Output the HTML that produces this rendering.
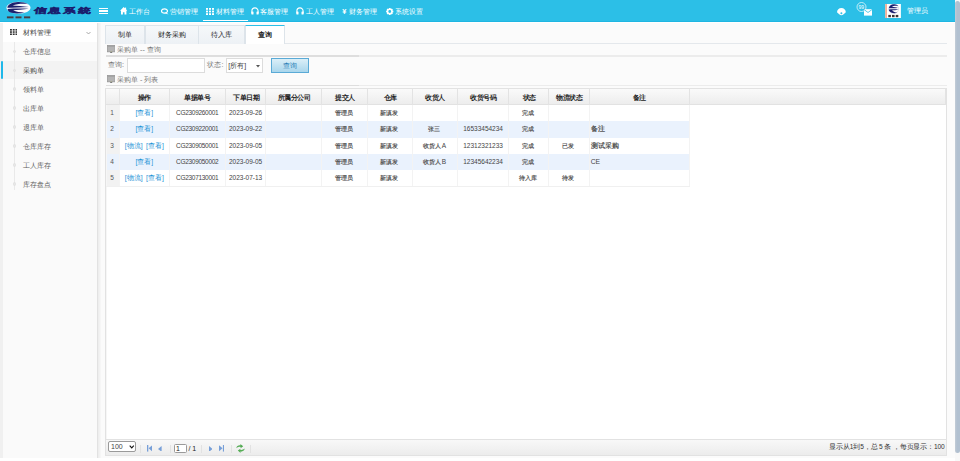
<!DOCTYPE html>
<html><head><meta charset="utf-8">
<style>
*{box-sizing:border-box;margin:0;padding:0}
html,body{width:960px;height:461px;overflow:hidden;background:#fff;font-family:"Liberation Sans",sans-serif;color:#333;font-weight:500}
.a{position:absolute;white-space:nowrap}
#hdr{position:absolute;left:0;top:0;width:955px;height:22.4px;background:#2cbfe7;border-bottom:0.4px solid #1fb6e2}
.nav{position:absolute;top:7.2px;font-size:7.4px;color:#fff;line-height:10px}
#side{position:absolute;left:0;top:22px;width:98px;height:436px;background:#fafafa;border-right:1px solid #e2e2e2}
#main{position:absolute;left:98px;top:22px;width:857px;height:436px;background:#fbfbfb}
#sb{position:absolute;left:955px;top:0;width:5px;height:461px;background:#f8f8f8}
#thumb{position:absolute;left:955.4px;top:0.5px;width:5px;height:452px;background:linear-gradient(90deg,#c3ccd6,#b1c0d0 40%);border-radius:2.5px}
.side-it{position:absolute;left:23px;font-size:7.2px;color:#606060;line-height:10px}
.tab{position:absolute;top:25px;height:18.5px;background:linear-gradient(#f5f8fa,#edf1f5);border:1px solid #dde4ea;border-bottom:none;border-radius:1px 1px 0 0;font-size:7.3px;color:#222;text-align:center;line-height:17px}
.sec{position:absolute;left:117px;font-size:7.2px;color:#777;line-height:10px}
.mon{position:absolute;left:107px;width:8px;height:7px;background:#aaa;border:1px solid #999}
.hr{position:absolute;left:105.5px;width:253px;height:1.6px;background:#dedede}
.hr2{position:absolute;left:358.5px;width:588.5px;height:1.6px;background:#ececec}
.th{position:absolute;top:88.3px;height:16.6px;font-size:7px;font-weight:bold;color:#222;text-align:center;line-height:17.2px;border-right:1px solid #e3e3e3}
.td{position:absolute;height:16.4px;font-size:6.5px;color:#444;text-align:center;line-height:16.9px;border-right:1px solid #f3f3f3}
.thl{position:absolute;top:97.7px;font-size:13px;font-weight:bold;color:#222;line-height:20px;white-space:nowrap;transform:translate(-50%,-50%) scale(0.5)}
.c{font-size:6px;position:relative;left:-1px;font-weight:700;color:#5a5a5a}
.lnk .c{font-size:6.6px;left:0;color:inherit;font-weight:500}
.bz .c{font-size:6.7px;left:0;font-weight:700;color:#555}
.cg{letter-spacing:-0.3px}
.lnk{color:#1f93d6;font-size:6.8px}
.logo-t{top:5.6px;width:0;font-size:7.2px;line-height:9px;font-weight:900;color:#1a1f6e;-webkit-text-stroke:0.45px #1a1f6e;transform:scaleX(1.75) skewX(-3deg);text-align:center}
.logo-t{text-indent:-3.2px}
.dot{position:absolute;left:12.6px;width:3.2px;height:3.2px;border-radius:50%;background:#e6e6e6;border:0.6px solid #e2e2e2}
</style></head><body>
<div id="hdr"></div>
<!-- logo -->
<svg class="a" style="left:0;top:0" width="36" height="22" viewBox="0 0 36 22">
<ellipse cx="18.5" cy="7.85" rx="12" ry="6" fill="#fbfbfd"/>
<path d="M7.3 7.8 C7.8 4.5 12 2.3 18 2.1 C22 2 25.5 2.8 27.8 4.2 C23 3.5 17 3.9 12.6 5.5 C17 5.7 23 6.2 28.8 7.1 C21 7.5 13 7.8 7.3 7.8Z" fill="#1d216e"/>
<path d="M7.6 8.9 C13 8.5 21 8.4 28.8 8.7 C23 9.5 17 9.9 13.2 10.3 C16 11.8 20 12.5 24.5 12.6 C19 13.9 13 13.7 10 12.3 C8.6 11.5 7.7 10.3 7.6 8.9Z" fill="#1d216e"/>
<g fill="#4a3c44"><rect x="6.9" y="16.4" width="6.6" height="1.9"/><rect x="15.5" y="16.4" width="6" height="1.9"/><rect x="24" y="16.4" width="6.2" height="1.9"/></g>
</svg>
<div class="a logo-t" style="left:39.5px">信</div><div class="a logo-t" style="left:53.8px">息</div><div class="a logo-t" style="left:68.6px">系</div><div class="a logo-t" style="left:83.6px">統</div>
<!-- hamburger -->
<div class="a" style="left:99px;top:7.5px;width:8.5px;height:1.6px;background:#fff"></div>
<div class="a" style="left:99px;top:10.2px;width:8.5px;height:1.6px;background:#fff"></div>
<div class="a" style="left:99px;top:12.9px;width:8.5px;height:1.6px;background:#fff"></div>
<!-- nav -->
<svg class="a" style="left:120px;top:7px" width="7.4" height="7.6" viewBox="0 0 7.4 7.6"><path d="M3.7 0 L7.4 3.7 L6.4 3.7 L6.4 7.6 L4.5 7.6 L4.5 5.3 L2.9 5.3 L2.9 7.6 L1 7.6 L1 3.7 L0 3.7Z" fill="#fff"/><rect x="5" y="0.6" width="1.1" height="2" fill="#fff"/></svg>
<div class="nav" style="left:129px">工作台</div>
<svg class="a" style="left:161px;top:8px" width="8" height="7" viewBox="0 0 8 7"><ellipse cx="3.5" cy="3" rx="3" ry="2.2" fill="none" stroke="#fff" stroke-width="1.2"/><path d="M5 4 L7.5 6.5 L4 5.2Z" fill="#fff"/></svg>
<div class="nav" style="left:170.4px">营销管理</div>
<svg class="a" style="left:206px;top:8px" width="8" height="7" viewBox="0 0 8 7"><g fill="#fff"><rect x="0" y="0" width="2" height="1.8"/><rect x="3" y="0" width="2" height="1.8"/><rect x="6" y="0" width="2" height="1.8"/><rect x="0" y="2.6" width="2" height="1.8"/><rect x="3" y="2.6" width="2" height="1.8"/><rect x="6" y="2.6" width="2" height="1.8"/><rect x="0" y="5.2" width="2" height="1.8"/><rect x="3" y="5.2" width="2" height="1.8"/><rect x="6" y="5.2" width="2" height="1.8"/></g></svg>
<div class="nav" style="left:215.6px">材料管理</div>
<div class="a" style="left:202.5px;top:19.5px;width:45px;height:1.3px;background:#fff"></div>
<svg class="a" style="left:251px;top:7px" width="8" height="8" viewBox="0 0 8 8"><path d="M0.9 6.5 L0.9 4 A3.1 3.1 0 0 1 7.1 4 L7.1 6.5" fill="none" stroke="#fff" stroke-width="1.1"/><rect x="0.4" y="4.4" width="2.1" height="3.1" rx="0.6" fill="#fff"/><rect x="5.5" y="4.4" width="2.1" height="3.1" rx="0.6" fill="#fff"/></svg>
<div class="nav" style="left:260.3px">客服管理</div>
<svg class="a" style="left:296px;top:7px" width="8" height="8" viewBox="0 0 8 8"><path d="M0.9 6.5 L0.9 4 A3.1 3.1 0 0 1 7.1 4 L7.1 6.5" fill="none" stroke="#fff" stroke-width="1.1"/><rect x="0.4" y="4.4" width="2.1" height="3.1" rx="0.6" fill="#fff"/><rect x="5.5" y="4.4" width="2.1" height="3.1" rx="0.6" fill="#fff"/></svg>
<div class="nav" style="left:305.7px">工人管理</div>
<div class="nav" style="left:342.3px;font-weight:bold">¥</div>
<div class="nav" style="left:348.8px">财务管理</div>
<svg class="a" style="left:386px;top:7.5px" width="7.5" height="7" viewBox="-3.75 -3.5 7.5 7"><circle r="2.25" fill="none" stroke="#fff" stroke-width="1.6"/><rect x="-0.8" y="-3.6" width="1.6" height="1.6" transform="rotate(0)" fill="#fff"/><rect x="-0.8" y="-3.6" width="1.6" height="1.6" transform="rotate(45)" fill="#fff"/><rect x="-0.8" y="-3.6" width="1.6" height="1.6" transform="rotate(90)" fill="#fff"/><rect x="-0.8" y="-3.6" width="1.6" height="1.6" transform="rotate(135)" fill="#fff"/><rect x="-0.8" y="-3.6" width="1.6" height="1.6" transform="rotate(180)" fill="#fff"/><rect x="-0.8" y="-3.6" width="1.6" height="1.6" transform="rotate(225)" fill="#fff"/><rect x="-0.8" y="-3.6" width="1.6" height="1.6" transform="rotate(270)" fill="#fff"/><rect x="-0.8" y="-3.6" width="1.6" height="1.6" transform="rotate(315)" fill="#fff"/></svg>
<div class="nav" style="left:395.3px">系统设置</div>
<!-- right icons -->
<svg class="a" style="left:830px;top:2px" width="22" height="18" viewBox="0 0 22 18"><path d="M7 10.3 C7 7.5 9 5.9 11.4 5.9 C13.8 5.9 15.8 7.5 15.8 10.3 C14.5 11.8 12.8 13.3 11.4 13.3 C10 13.3 8.3 11.8 7 10.3Z" fill="#fff"/><circle cx="11.4" cy="11.2" r="1" fill="#2cbfe7"/></svg>
<svg class="a" style="left:856px;top:2px" width="17" height="14" viewBox="0 0 17 14"><circle cx="5.5" cy="5" r="4.5" fill="none" stroke="#fff" stroke-width="0.7"/><text x="2.5" y="7" font-size="5" fill="#fff" font-family="Liberation Sans">99</text><rect x="8" y="7.2" width="8" height="6.4" fill="#fff"/><path d="M8 7.5 L12 10.5 L16 7.5" fill="none" stroke="#2cbfe7" stroke-width="0.8"/></svg>
<svg class="a" style="left:882px;top:2px" width="22" height="18" viewBox="0 0 22 18">
<rect x="3.3" y="2" width="15.6" height="14" fill="#fff"/>
<rect x="3.3" y="2" width="1.6" height="14" fill="#f3a88c"/>
<ellipse cx="11.7" cy="6.8" rx="5" ry="4.6" fill="none" stroke="#c9cbe0" stroke-width="0.6"/>
<path d="M6.8 6.2 C7.2 3.5 9.5 2.3 12 2.3 C14 2.3 15.5 3 16.3 4 C14 3.4 11.5 3.6 10 4.8 C12 5 14.5 5.4 16 6 C13 6.3 9.5 6.4 6.8 6.2Z" fill="#1c2070"/>
<path d="M6.8 7.4 C9.5 7.2 13 7.2 16.5 7.5 C14 8.2 11.5 8.4 10 8.4 C11.5 9.8 14 10.6 15.5 10.4 C13.5 11.6 9.5 11.4 7.8 9.6 C7.2 8.9 6.9 8.2 6.8 7.4Z" fill="#1c2070"/>
<g fill="#3e3434"><rect x="6.3" y="12.9" width="2.6" height="2.3"/><rect x="10" y="12.9" width="2.6" height="2.3"/><rect x="13.7" y="12.9" width="2.6" height="2.3"/></g>
</svg>
<div class="nav" style="left:907px;top:6px">管理员</div>

<!-- sidebar -->
<div id="side"></div>
<div class="a" style="left:0;top:22px;width:2.7px;height:436px;background:#f0f0f0"></div>
<div class="a" style="left:2.6px;top:22px;width:94.6px;height:19.5px;background:#fff"></div>
<svg class="a" style="left:9.8px;top:28.9px" width="7.4" height="6.1" viewBox="0 0 7 6" preserveAspectRatio="none"><g fill="#333"><rect x="0" y="0" width="1.8" height="1.6"/><rect x="2.6" y="0" width="1.8" height="1.6"/><rect x="5.2" y="0" width="1.8" height="1.6"/><rect x="0" y="2.2" width="1.8" height="1.6"/><rect x="2.6" y="2.2" width="1.8" height="1.6"/><rect x="5.2" y="2.2" width="1.8" height="1.6"/><rect x="0" y="4.4" width="1.8" height="1.6"/><rect x="2.6" y="4.4" width="1.8" height="1.6"/><rect x="5.2" y="4.4" width="1.8" height="1.6"/></g></svg>
<div class="a" style="left:23.4px;top:27.5px;font-size:7.3px;color:#444;line-height:10px">材料管理</div>
<svg class="a" style="left:86px;top:31px" width="5" height="4" viewBox="0 0 5 4"><path d="M0.5 1 L2.5 3 L4.5 1" fill="none" stroke="#888" stroke-width="0.7"/></svg>
<div class="a" style="left:2.7px;top:60.5px;width:94.5px;height:18.7px;background:#f3f3f3"></div>
<div class="a" style="left:0.5px;top:60.8px;width:2.1px;height:18.6px;background:#1fb8ea;border-radius:1px"></div>
<div class="a" style="left:13.7px;top:41.5px;width:1px;height:148.5px;background:#e9e9e9"></div>
<div class="dot" style="top:49.7px"></div><div class="dot" style="top:68.6px"></div><div class="dot" style="top:87.4px"></div><div class="dot" style="top:106.4px"></div><div class="dot" style="top:125.4px"></div><div class="dot" style="top:144.4px"></div><div class="dot" style="top:163.4px"></div><div class="dot" style="top:182.4px"></div>
<div class="side-it" style="top:46.7px">仓库信息</div>
<div class="side-it" style="top:65.5px;color:#444">采购单</div>
<div class="side-it" style="top:84.6px">领料单</div>
<div class="side-it" style="top:103.6px">出库单</div>
<div class="side-it" style="top:122.6px">退库单</div>
<div class="side-it" style="top:141.6px">仓库库存</div>
<div class="side-it" style="top:160.6px">工人库存</div>
<div class="side-it" style="top:179.6px">库存盘点</div>

<!-- main -->
<div id="main"></div>
<div class="a" style="left:0;top:22.4px;width:955px;height:1.1px;background:#fff"></div>

<div class="a" style="left:105.3px;top:43.3px;width:841.5px;height:1px;background:#e4e8ec"></div>
<div class="tab" style="left:105.3px;width:40px">制单</div>
<div class="tab" style="left:145px;width:53.5px">财务采购</div>
<div class="tab" style="left:198.3px;width:47px">待入库</div>
<div class="tab" style="left:245.1px;width:39.8px;height:19.3px;background:#fff;border-top:1.2px solid #2cbfe7;color:#222;font-weight:bold">查询</div>

<svg class="a" style="left:106.8px;top:45px" width="8.4" height="8.4" viewBox="0 0 8.4 8.4"><rect x="0.3" y="0.3" width="7.8" height="6.6" fill="#b4b4b4" stroke="#8f8f8f" stroke-width="0.6"/><rect x="0.6" y="0.6" width="7.2" height="1" fill="#9c9c9c"/><rect x="3.2" y="6.9" width="2" height="1.3" fill="#7a7a7a"/><rect x="3.8" y="6.4" width="0.8" height="0.5" fill="#c8d070"/></svg>
<div class="sec" style="top:44.5px">采购单 -- 查询</div>
<div class="hr" style="top:55.2px"></div><div class="hr2" style="top:55.2px"></div>
<div class="a" style="left:108px;top:59.5px;font-size:7.2px;color:#777;line-height:10px">查询:</div>
<div class="a" style="left:127.3px;top:58px;width:77.3px;height:14.5px;background:#fff;border:1px solid #dcdcdc"></div>
<div class="a" style="left:207.4px;top:59.5px;font-size:7.2px;color:#777;line-height:10px">状态:</div>
<div class="a" style="left:226.2px;top:58px;width:36.5px;height:14.7px;background:#fff;border:1px solid #dcdcdc"></div>
<div class="a" style="left:228.2px;top:60.5px;font-size:7px;color:#444;line-height:10px">[所有]</div>
<svg class="a" style="left:256px;top:65px" width="4" height="3" viewBox="0 0 4 3"><path d="M0 0 L4 0 L2 2.5Z" fill="#555"/></svg>
<div class="a" style="left:271.1px;top:58px;width:37.8px;height:15px;background:linear-gradient(#dbeff8,#a9d6ec);border:1px solid #5aaad6;font-size:7px;color:#2a7fb8;text-align:center;line-height:13px">查询</div>

<svg class="a" style="left:106.8px;top:75px" width="8.4" height="8.4" viewBox="0 0 8.4 8.4"><rect x="0.3" y="0.3" width="7.8" height="6.6" fill="#b4b4b4" stroke="#8f8f8f" stroke-width="0.6"/><rect x="0.6" y="0.6" width="7.2" height="1" fill="#9c9c9c"/><rect x="3.2" y="6.9" width="2" height="1.3" fill="#7a7a7a"/><rect x="3.8" y="6.4" width="0.8" height="0.5" fill="#c8d070"/></svg>
<div class="sec" style="top:74.5px">采购单 - 列表</div>
<div class="hr" style="top:84.9px"></div><div class="hr2" style="top:84.9px"></div>

<!-- table -->
<div class="a" style="left:105.3px;top:88.2px;width:841.6px;height:351.5px;background:#fff;border:1px solid #e2e2e2"></div>
<div class="a" style="left:105.3px;top:88.2px;width:841.6px;height:16.9px;background:linear-gradient(#fafafa,#ededed);border:1px solid #e2e2e2"></div>
<div id="grid"><div class="th" style="left:105.3px;width:14.7px"></div>
<div class="th" style="left:120px;width:49.6px"></div>
<div class="thl" style="left:144.30px">操作</div>
<div class="th" style="left:169.6px;width:56.2px"></div>
<div class="thl" style="left:197.20px">单据单号</div>
<div class="th" style="left:225.8px;width:40.5px"></div>
<div class="thl" style="left:245.55px">下单日期</div>
<div class="th" style="left:266.3px;width:56.2px"></div>
<div class="thl" style="left:293.90px">所属分公司</div>
<div class="th" style="left:322.5px;width:45.0px"></div>
<div class="thl" style="left:344.50px">提交人</div>
<div class="th" style="left:367.5px;width:45.5px"></div>
<div class="thl" style="left:389.75px">仓库</div>
<div class="th" style="left:413px;width:45.0px"></div>
<div class="thl" style="left:435.00px">收货人</div>
<div class="th" style="left:458px;width:51.2px"></div>
<div class="thl" style="left:483.10px">收货号码</div>
<div class="th" style="left:509.2px;width:40.1px"></div>
<div class="thl" style="left:528.75px">状态</div>
<div class="th" style="left:549.3px;width:40.6px"></div>
<div class="thl" style="left:569.10px">物流状态</div>
<div class="th" style="left:589.9px;width:100.0px"></div>
<div class="thl" style="left:639.40px">备注</div>
<div class="th" style="left:689.9px;width:256.4px"></div>
<div class="a" style="left:106.3px;top:105.10px;width:583.6px;height:16.28px;background:#fff"></div>
<div class="a" style="left:106.3px;top:105.10px;width:13.7px;height:16.28px;background:#f2f2f2"></div>
<div class="td" style="left:105.3px;top:105.10px;width:14.7px;color:#555;">1</div>
<div class="td" style="left:120px;top:105.10px;width:49.6px;"><span class="lnk">[<span class="c">查看</span>]</span></div>
<div class="td" style="left:169.6px;top:105.10px;width:56.2px;"><span class="cg">CG2309260001</span></div>
<div class="td" style="left:225.8px;top:105.10px;width:40.5px;">2023-09-26</div>
<div class="td" style="left:266.3px;top:105.10px;width:56.2px;"></div>
<div class="td" style="left:322.5px;top:105.10px;width:45.0px;"><span class="c">管理员</span></div>
<div class="td" style="left:367.5px;top:105.10px;width:45.5px;"><span class="c">新滇发</span></div>
<div class="td" style="left:413px;top:105.10px;width:45.0px;"></div>
<div class="td" style="left:458px;top:105.10px;width:51.2px;"></div>
<div class="td" style="left:509.2px;top:105.10px;width:40.1px;"><span class="c">完成</span></div>
<div class="td" style="left:549.3px;top:105.10px;width:40.6px;"></div>
<div class="td" style="left:589.9px;top:105.10px;width:100.0px;text-align:left;padding-left:0.8px;font-size:6.8px;color:#444;"></div>
<div class="a" style="left:106.3px;top:121.38px;width:583.6px;height:16.28px;background:#eaf2fd"></div>
<div class="td" style="left:105.3px;top:121.38px;width:14.7px;color:#555;">2</div>
<div class="td" style="left:120px;top:121.38px;width:49.6px;"><span class="lnk">[<span class="c">查看</span>]</span></div>
<div class="td" style="left:169.6px;top:121.38px;width:56.2px;"><span class="cg">CG2309220001</span></div>
<div class="td" style="left:225.8px;top:121.38px;width:40.5px;">2023-09-22</div>
<div class="td" style="left:266.3px;top:121.38px;width:56.2px;"></div>
<div class="td" style="left:322.5px;top:121.38px;width:45.0px;"><span class="c">管理员</span></div>
<div class="td" style="left:367.5px;top:121.38px;width:45.5px;"><span class="c">新滇发</span></div>
<div class="td" style="left:413px;top:121.38px;width:45.0px;"><span class="c">张三</span></div>
<div class="td" style="left:458px;top:121.38px;width:51.2px;">16533454234</div>
<div class="td" style="left:509.2px;top:121.38px;width:40.1px;"><span class="c">完成</span></div>
<div class="td" style="left:549.3px;top:121.38px;width:40.6px;"></div>
<div class="td" style="left:589.9px;top:121.38px;width:100.0px;text-align:left;padding-left:0.8px;font-size:6.8px;color:#444;"><span class=bz><span class="c">备注</span></span></div>
<div class="a" style="left:106.3px;top:137.66px;width:583.6px;height:16.28px;background:#fff"></div>
<div class="a" style="left:106.3px;top:137.66px;width:13.7px;height:16.28px;background:#f2f2f2"></div>
<div class="td" style="left:105.3px;top:137.66px;width:14.7px;color:#555;">3</div>
<div class="td" style="left:120px;top:137.66px;width:49.6px;"><span class="lnk">[<span class="c">物流</span>]</span><span class="lnk" style="margin-left:3.4px">[<span class="c">查看</span>]</span></div>
<div class="td" style="left:169.6px;top:137.66px;width:56.2px;"><span class="cg">CG2309050001</span></div>
<div class="td" style="left:225.8px;top:137.66px;width:40.5px;">2023-09-05</div>
<div class="td" style="left:266.3px;top:137.66px;width:56.2px;"></div>
<div class="td" style="left:322.5px;top:137.66px;width:45.0px;"><span class="c">管理员</span></div>
<div class="td" style="left:367.5px;top:137.66px;width:45.5px;"><span class="c">新滇发</span></div>
<div class="td" style="left:413px;top:137.66px;width:45.0px;"><span class="c">收货人</span>A</div>
<div class="td" style="left:458px;top:137.66px;width:51.2px;">12312321233</div>
<div class="td" style="left:509.2px;top:137.66px;width:40.1px;"><span class="c">完成</span></div>
<div class="td" style="left:549.3px;top:137.66px;width:40.6px;"><span class="c">已发</span></div>
<div class="td" style="left:589.9px;top:137.66px;width:100.0px;text-align:left;padding-left:0.8px;font-size:6.8px;color:#444;"><span class=bz><span class="c">测试采购</span></span></div>
<div class="a" style="left:106.3px;top:153.94px;width:583.6px;height:16.28px;background:#eaf2fd"></div>
<div class="td" style="left:105.3px;top:153.94px;width:14.7px;color:#555;">4</div>
<div class="td" style="left:120px;top:153.94px;width:49.6px;"><span class="lnk">[<span class="c">查看</span>]</span></div>
<div class="td" style="left:169.6px;top:153.94px;width:56.2px;"><span class="cg">CG2309050002</span></div>
<div class="td" style="left:225.8px;top:153.94px;width:40.5px;">2023-09-05</div>
<div class="td" style="left:266.3px;top:153.94px;width:56.2px;"></div>
<div class="td" style="left:322.5px;top:153.94px;width:45.0px;"><span class="c">管理员</span></div>
<div class="td" style="left:367.5px;top:153.94px;width:45.5px;"><span class="c">新滇发</span></div>
<div class="td" style="left:413px;top:153.94px;width:45.0px;"><span class="c">收货人</span>B</div>
<div class="td" style="left:458px;top:153.94px;width:51.2px;">12345642234</div>
<div class="td" style="left:509.2px;top:153.94px;width:40.1px;"><span class="c">完成</span></div>
<div class="td" style="left:549.3px;top:153.94px;width:40.6px;"></div>
<div class="td" style="left:589.9px;top:153.94px;width:100.0px;text-align:left;padding-left:0.8px;font-size:6.8px;color:#444;"><span class=bz>CE</span></div>
<div class="a" style="left:106.3px;top:170.22px;width:583.6px;height:16.28px;background:#fff"></div>
<div class="a" style="left:106.3px;top:170.22px;width:13.7px;height:16.28px;background:#f2f2f2"></div>
<div class="td" style="left:105.3px;top:170.22px;width:14.7px;color:#555;">5</div>
<div class="td" style="left:120px;top:170.22px;width:49.6px;"><span class="lnk">[<span class="c">物流</span>]</span><span class="lnk" style="margin-left:3.4px">[<span class="c">查看</span>]</span></div>
<div class="td" style="left:169.6px;top:170.22px;width:56.2px;"><span class="cg">CG2307130001</span></div>
<div class="td" style="left:225.8px;top:170.22px;width:40.5px;">2023-07-13</div>
<div class="td" style="left:266.3px;top:170.22px;width:56.2px;"></div>
<div class="td" style="left:322.5px;top:170.22px;width:45.0px;"><span class="c">管理员</span></div>
<div class="td" style="left:367.5px;top:170.22px;width:45.5px;"><span class="c">新滇发</span></div>
<div class="td" style="left:413px;top:170.22px;width:45.0px;"></div>
<div class="td" style="left:458px;top:170.22px;width:51.2px;"></div>
<div class="td" style="left:509.2px;top:170.22px;width:40.1px;"><span class="c">待入库</span></div>
<div class="td" style="left:549.3px;top:170.22px;width:40.6px;"><span class="c">待发</span></div>
<div class="td" style="left:589.9px;top:170.22px;width:100.0px;text-align:left;padding-left:0.8px;font-size:6.8px;color:#444;"></div></div><!--/grid-->

<div class="a" style="left:98px;top:23px;width:2.5px;height:435px;background:linear-gradient(90deg,#ececec,#f8f8f8)"></div>
<div class="a" style="left:106.3px;top:105px;width:1.2px;height:334px;background:#f6f6f6"></div>
<div class="a" style="left:106.3px;top:186.4px;width:583.6px;height:0.8px;background:#f0f0f0"></div>
<!-- pager -->
<div class="a" style="left:105.3px;top:439.6px;width:841.6px;height:16.2px;background:linear-gradient(#f8f8f8,#ececec);border:1px solid #e2e2e2;border-top:none"></div>
<div class="a" style="left:108.2px;top:441.3px;width:28px;height:10.5px;background:#fff;border:0.8px solid #9a9a9a;border-radius:2px"></div>
<div class="a" style="left:111px;top:442px;font-size:7px;color:#444;line-height:9px">100</div>
<svg class="a" style="left:129px;top:445px" width="5.5" height="4" viewBox="0 0 5.5 4"><path d="M0.7 0.7 L2.75 2.9 L4.8 0.7" fill="none" stroke="#111" stroke-width="1.1"/></svg>
<div class="a" style="left:140px;top:445.4px;width:0.8px;height:7.2px;background:#e2e2e2"></div>
<svg class="a" style="left:147px;top:445px" width="5.2" height="6.6" viewBox="0 0 5.2 6.6"><rect x="0" y="0" width="1.3" height="6.6" fill="#779fd8"/><path d="M5.2 0.3 L5.2 6.3 L1.6 3.3Z" fill="#779fd8"/></svg>
<svg class="a" style="left:158.3px;top:445.6px" width="3.6" height="5.8" viewBox="0 0 3.6 5.8"><path d="M3.6 0 L3.6 5.8 L0 2.9Z" fill="#779fd8"/></svg>
<div class="a" style="left:170px;top:445.4px;width:0.8px;height:7.2px;background:#e2e2e2"></div>
<div class="a" style="left:174.1px;top:443.6px;width:12.5px;height:9.8px;background:#fff;border:0.8px solid #9a9a9a;border-radius:1.5px"></div>
<div class="a" style="left:176px;top:443.5px;font-size:7px;color:#222;line-height:10px">1</div>
<div class="a" style="left:188.4px;top:443.5px;font-size:7px;color:#222;line-height:10px">/ 1</div>
<div class="a" style="left:201px;top:445.4px;width:0.8px;height:7.2px;background:#e2e2e2"></div>
<svg class="a" style="left:208.9px;top:445.6px" width="3.6" height="5.8" viewBox="0 0 3.6 5.8"><path d="M0 0 L0 5.8 L3.6 2.9Z" fill="#779fd8"/></svg>
<svg class="a" style="left:219px;top:445px" width="5.2" height="6.6" viewBox="0 0 5.2 6.6"><rect x="3.9" y="0" width="1.3" height="6.6" fill="#779fd8"/><path d="M0 0.3 L0 6.3 L3.6 3.3Z" fill="#779fd8"/></svg>
<div class="a" style="left:231px;top:445.4px;width:0.8px;height:7.2px;background:#e2e2e2"></div>
<svg class="a" style="left:234px;top:443px" width="12" height="11" viewBox="0 0 12 11"><path d="M2.2 5.2 C2.6 3 4.5 2 6.6 2.3 L6.3 0.9 L9.2 3.3 L6.6 5.2 L6.6 3.9 C5 3.6 3.5 4.2 2.2 5.2Z" fill="#4fa84f"/><path d="M10.8 5.6 C10.4 7.8 8.5 8.9 6.3 8.6 L6.6 10 L3.8 7.6 L6.4 5.7 L6.4 7 C8 7.3 9.5 6.7 10.8 5.6Z" fill="#55ad55"/></svg>
<div class="a" style="left:249.8px;top:445.4px;width:0.8px;height:7.2px;background:#e2e2e2"></div>
<div class="a" style="left:700px;width:244.5px;text-align:right;top:442px;font-size:6.6px;letter-spacing:-0.15px;color:#333;line-height:10px">显示从1到5，总 5 条 ，每页显示：100</div>

<div id="sb"></div>
<div id="thumb"></div>
</body></html>
